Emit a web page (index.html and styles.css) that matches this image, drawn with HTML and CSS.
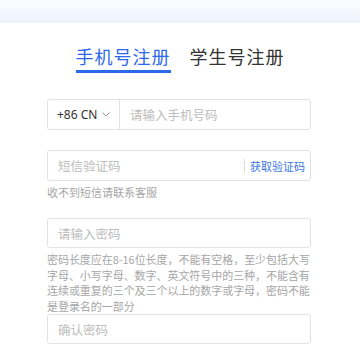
FILE: index.html
```html
<!DOCTYPE html>
<html lang="zh-CN">
<head>
<meta charset="utf-8">
<link rel="stylesheet" href="styles.css">
</head>
<body>
<div class="band"></div>
<div class="tabs">
  <div class="tab active">手机号注册</div>
  <div class="tab">学生号注册</div>
</div>
<form class="form">
  <div class="field phone">
    <div class="cc">+86 CN <svg class="chev" width="8" height="5" viewBox="0 0 8 5"><path d="M0.5 0.5 L4 4 L7.5 0.5" fill="none" stroke="#999" stroke-width="1"/></svg></div>
    <input class="inp" placeholder="请输入手机号码">
  </div>
  <div class="field sms">
    <input class="inp" placeholder="短信验证码">
    <span class="divider"></span>
    <span class="get">获取验证码</span>
  </div>
  <p class="hint">收不到短信请联系客服</p>
  <div class="field pw">
    <input class="inp" placeholder="请输入密码">
  </div>
  <p class="hint rules">密码长度应在8-16位长度，不能有空格，至少包括大写字母、小写字母、数字、英文符号中的三种，不能含有连续或重复的三个及三个以上的数字或字母，密码不能是登录名的一部分</p>
  <div class="field confirm">
    <input class="inp" placeholder="确认密码">
  </div>
</form>
</body>
</html>
```

FILE: styles.css
```css
* { box-sizing: border-box; }
body {
  margin: 0;
  background: #fff;
  font-family: "Noto Sans", "Noto Sans CJK SC", sans-serif;
  color: #333;
}
.band {
  height: 23px;
  background: linear-gradient(#fafcff, #edf2fc);
}
.tabs {
  display: flex;
  justify-content: center;
  gap: 19px;
  margin-top: 21px;
}
.tab {
  font-family: "Noto Sans CJK SC", sans-serif;
  font-size: 18px;
  line-height: 24px;
  letter-spacing: 1px;
  padding-bottom: 2px;
  border-bottom: 3px solid transparent;
  color: #333;
}
.tab.active {
  color: #2b6ae8;
  border-bottom-color: #2b6ae8;
}
.form {
  margin: 26px 0 0 47px;
  width: 264px;
  display: flex;
  flex-direction: column;
}
.field {
  height: 31px;
  border: 1px solid #e2e2e2;
  border-radius: 3px;
  display: flex;
  align-items: center;
  background: #fff;
}
.sms { margin-top: 20px; }
.pw { margin-top: 18px; height: 30px; }
.confirm { margin-top: 0; height: 30px; }
.cc {
  width: 72px;
  height: 100%;
  border-right: 1px solid #e2e2e2;
  display: flex;
  align-items: center;
  padding-left: 9px;
  font-size: 12px;
  color: #333;
  gap: 5px;
}
.inp {
  flex: 1;
  min-width: 0;
  border: 0;
  outline: 0;
  background: transparent;
  height: 100%;
  padding: 0 0 0 10px;
  font-family: "Noto Sans CJK SC", sans-serif;
  font-size: 12.5px;
  color: #333;
}
.inp::placeholder { color: #bdbdbd; }
.divider {
  width: 1px;
  height: 14px;
  background: #dcdcdc;
  margin-right: 5px;
}
.get {
  font-family: "Noto Sans CJK SC", sans-serif;
  font-size: 11px;
  color: #3a76e6;
  padding-right: 5px;
}
.hint {
  margin: 3px 0 0;
  font-family: "Noto Sans CJK SC", sans-serif;
  font-size: 11px;
  line-height: 16px;
  color: #a6a6a6;
}
.rules {
  margin: 4px -4px 0 0;
  line-height: 15.5px;
  letter-spacing: -0.05px;
}
```
